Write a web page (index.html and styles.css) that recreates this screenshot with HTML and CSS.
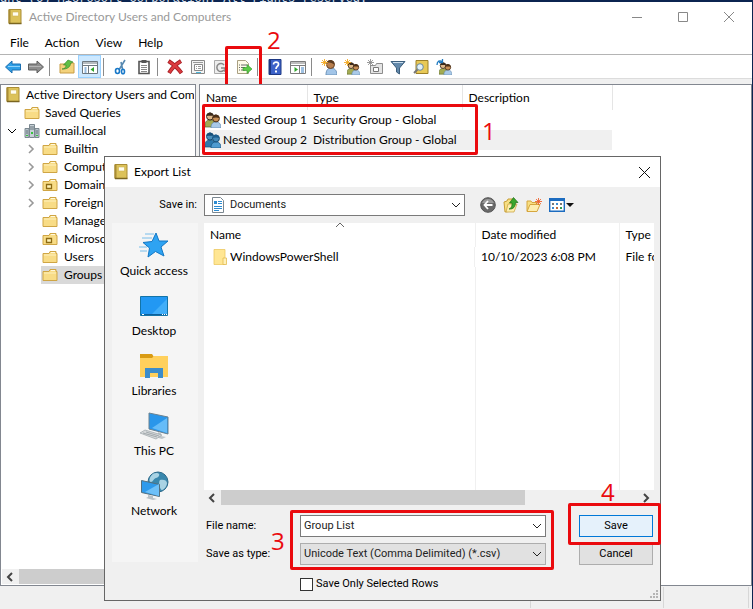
FILE: index.html
```html
<!DOCTYPE html>
<html lang="en">
<head>
  <meta charset="UTF-8">
  <meta name="viewport" content="width=device-width, initial-scale=1.0">
  <title>Active Directory Users and Computers</title>
  <link rel="stylesheet" href="styles.css">
</head>
<body>
  <!-- shared icons -->
  <svg class="sprite" width="0" height="0" aria-hidden="true">
    <symbol id="i-book" viewBox="0 0 16 16">
      <path d="M2 .5h12v14H2z" fill="#dcc25a" stroke="#a98c34"/>
      <path d="M1.500 .5h2v14h-2z" fill="#a98c34"/>
      <path d="M5.500 3h6v4h-6z" fill="#fffdf0" stroke="#cdb250" stroke-width=".6"/>
      <path d="M2 14.500h12.500" stroke="#7a6520" stroke-width="1.500"/>
    </symbol>
    <symbol id="i-folder" viewBox="0 0 16 16">
      <path d="M1 4.500h6l1-2h6v2h1v9H1z" fill="#f8dc86" stroke="#cfa544"/>
      <path d="M9 3.500h4" stroke="#fff8dc"/>
      <path d="M2 6h12" stroke="#fdf0bd"/>
    </symbol>
    <symbol id="i-ou" viewBox="0 0 16 16">
      <path d="M1 4.500h6l1-2h6v2h1v9H1z" fill="#f8dc86" stroke="#cfa544"/>
      <path d="M9 3.500h4" stroke="#fff8dc"/>
      <path d="M4.500 7.500h5v4h-5z" fill="#fff3b8" stroke="#8d6b14" stroke-width="1.300"/>
    </symbol>
    <symbol id="i-domain" viewBox="0 0 16 16">
      <path d="M5.500 1.500h5v13h-5z" fill="#c7d0d6" stroke="#7b8890"/>
      <path d="M1 5.500h4v9H1zM11 5.500h4v9h-4z" fill="#b8c4cb" stroke="#7b8890"/>
      <path d="M6 4h4M6 6h4M2 8h2M12 8h2M2 10h2M12 10h2" stroke="#64727b"/>
      <path d="M7 9h2v2H7zM2 12h2v1H2zM12 12h2v1h-2z" fill="#35c43c"/>
    </symbol>
    <symbol id="i-right" viewBox="0 0 10 10"><path d="M3 1l4 4-4 4" fill="none" stroke="#999" stroke-width="1.600"/></symbol>
    <symbol id="i-down" viewBox="0 0 10 10"><path d="M1 3l4 4 4-4" fill="none" stroke="currentColor"/></symbol>
    <symbol id="i-group" viewBox="0 0 16 16">
      <path d="M0 15c0-5 1-7 5-7s5 2 5 7z" fill="#a3ab52" stroke="#59662a" stroke-width=".7"/>
      <circle cx="5" cy="4.500" r="3.500" fill="#ddb98c" stroke="#3b2a1c"/>
      <path d="M1.500 4c0-4 6-5 7-.5-2 .5-4 0-7 .5z" fill="#3b2a1c"/>
      <path d="M6 16c0-4.500 2-6 5-6s5 1.500 5 6z" fill="#a9c9e8" stroke="#6288ac" stroke-width=".7"/>
      <circle cx="11" cy="6.500" r="3.400" fill="#c98f55" stroke="#4a2e17"/>
      <path d="M7.500 6c0-4.500 6-5 7 0-2-.8-5-.8-7 0z" fill="#4a2e17"/>
    </symbol>
    <symbol id="i-group-blue" viewBox="0 0 16 16">
      <path d="M0 15c0-5 1-7 5-7s5 2 5 7z" fill="#2c78ad" stroke="#174f78" stroke-width=".7"/>
      <circle cx="5" cy="4.500" r="3.500" fill="#4a8fbb" stroke="#174f78"/>
      <path d="M1.500 4c0-4 6-5 7-.5-2 .5-4 0-7 .5z" fill="#174f78"/>
      <path d="M6 16c0-4.500 2-6 5-6s5 1.500 5 6z" fill="#4f9bd0" stroke="#174f78" stroke-width=".7"/>
      <circle cx="11" cy="6.500" r="3.400" fill="#4389b8" stroke="#174f78"/>
      <path d="M7.500 6c0-4.500 6-5 7 0-2-.8-5-.8-7 0z" fill="#1d5f8f"/>
    </symbol>
    <symbol id="i-star" viewBox="0 0 10 10"><path d="M5 0v10M0 5h10M1.500 1.500l7 7M8.500 1.500l-7 7" stroke="currentColor" stroke-width="1.200"/></symbol>
  </svg>

  <div class="console">ght (C) Microsoft Corporation. All rights reserved.</div>

  <main class="window">
    <header class="titlebar">
      <svg class="ico"><use href="#i-book"/></svg>
      <h1>Active Directory Users and Computers</h1>
      <div class="winbtns">
        <button aria-label="Minimize"><svg width="10" height="10"><path d="M0 5.500h10" stroke="#888"/></svg></button>
        <button aria-label="Maximize"><svg width="10" height="10"><path d="M.5.500h9v9h-9z" fill="none" stroke="#888"/></svg></button>
        <button aria-label="Close"><svg width="10" height="10"><path d="M0 0l10 10M10 0L0 10" stroke="#888"/></svg></button>
      </div>
    </header>

    <nav class="menubar">
      <button>File</button>
      <button>Action</button>
      <button>View</button>
      <button>Help</button>
    </nav>

    <div class="toolbar">
      <button aria-label="Back"><svg class="ico"><path d="M.5 8L7 2v3h8.500v6H7v3z" fill="#2f9fe6" stroke="#1c6fb0"/><path d="M3 7.500h12" stroke="#8fd2fa"/></svg></button>
      <button aria-label="Forward"><svg class="ico"><path d="M15.500 8L9 2v3H.5v6H9v3z" fill="#8e8e8e" stroke="#5c5c5c"/><path d="M1 7.500h12" stroke="#b5b5b5"/></svg></button>
      <span class="sep"></span>
      <button aria-label="Up one level"><svg class="ico"><path d="M1 5h5l1-1h8v10H1z" fill="#f3d27c" stroke="#c79c44"/><path d="M3 10c3 0 4-2 4-4H4.500L9 1l5 2-2.500 1.500c0 3-3 6-8.500 5.500z" fill="#5fbf45" stroke="#2c7d22" stroke-width=".6"/></svg></button>
      <button class="on" aria-label="Show console tree"><svg class="ico"><path d="M.5 2.500h15v12H.5z" fill="#fff" stroke="#6d7880"/><path d="M1 4h14M1 6.500h14" stroke="#6d7880"/><path d="M6.500 7v8" stroke="#6d7880"/><path d="M2.500 9h2M2.500 11h2M2.500 13h2" stroke="#2c77bd"/><path d="M12 8v5l-3.500-2.500z" fill="#2fa52b"/></svg></button>
      <span class="sep"></span>
      <button aria-label="Cut"><svg class="ico"><path d="M12 1L6.500 10M8 3l1.500 7" stroke="#5789b0" stroke-width="1.600"/><ellipse cx="4.500" cy="12" rx="2" ry="2.500" fill="none" stroke="#1878c8" stroke-width="1.600"/><ellipse cx="10" cy="12.500" rx="1.500" ry="2.300" fill="none" stroke="#1878c8" stroke-width="1.600"/></svg></button>
      <button aria-label="Paste"><svg class="ico"><path d="M3 2.500h10v12H3z" fill="#fff" stroke="#555" stroke-width="1.600"/><path d="M5.500 1h5v3h-5z" fill="#555"/><path d="M5 6.500h6M5 8.500h6M5 10.500h6M5 12.500h6" stroke="#888"/></svg></button>
      <span class="sep"></span>
      <button aria-label="Delete"><svg class="ico"><path d="M1.500 2C6 5 11 9 14.500 14M14 2C9 5 5 9 2 14" fill="none" stroke="#a51d23" stroke-width="4"/><path d="M2 2.500C6 5 11 9 14 13.500M13.500 2.500C9 5 5 9 2.500 13.500" fill="none" stroke="#dc3b3f" stroke-width="2.500"/></svg></button>
      <button aria-label="Properties"><svg class="ico"><path d="M1.500 1.500h13v13h-13z" fill="#f4f4f4" stroke="#888"/><path d="M4.500 5.500h8v6h-8z" fill="#fff" stroke="#888"/><path d="M3 3.500h10M6 7.500h1M8 7.500h3M6 9.500h1M8 9.500h3" stroke="#999"/><path d="M6 13.500h5" stroke="#4bb4d8"/></svg></button>
      <button aria-label="Refresh"><svg class="ico"><path d="M1.500 1.500h10l3 3v10h-13z" fill="#eee" stroke="#aaa"/><path d="M11 6a4 4 0 1 0 0 5M8 9h4v4" fill="none" stroke="#888" stroke-width="1.500"/></svg></button>
      <button class="marked" aria-label="Export list">
        <svg class="ico"><path d="M1.500 1.500h8l3 3v10h-11z" fill="#fffbe8" stroke="#a99f82"/><path d="M3 6h1M5 6h6M3 8.500h1M5 8.500h4M3 11h1M5 11h4" stroke="#6b6b6b"/><path d="M7 8.500h4V5.500l5 4.500-5 4.500v-3H7z" fill="#5ccb46" stroke="#31942a" stroke-width=".6"/></svg>
        <span class="mark mark-2"><b>2</b></span>
      </button>
      <span class="sep"></span>
      <button aria-label="Help"><svg class="ico"><path d="M2 .5h12v15H2z" fill="#3c62c9" stroke="#1d3883"/><path d="M2 .5h2v15H2z" fill="#1d3883"/><path d="M6.500 5.500c0-3.500 5.500-3 5 0-.3 2-2.500 2-2.500 4.500" fill="none" stroke="#fff" stroke-width="1.700"/><path d="M8 11.500h2v2H8z" fill="#fff"/></svg></button>
      <button aria-label="Show action pane"><svg class="ico"><path d="M.5 2.500h15v12H.5z" fill="#fff" stroke="#7c7c7c"/><path d="M1 4h14M1 6.500h14M9.500 7v8" stroke="#7c7c7c"/><path d="M11 9h3M11 11h3M11 13h3" stroke="#3f82c4"/><path d="M4.500 8v5L8 10.500z" fill="#2fa52b"/></svg></button>
      <span class="sep"></span>
      <button aria-label="New user"><svg class="ico"><path d="M5 16c0-5 2-7 5-7s6 2 6 7z" fill="#a2c5e8" stroke="#6c93b9"/><circle cx="9.500" cy="5.500" r="4" fill="#b97f4e" stroke="#6b4425"/><path d="M6 3.500c2-4 7-3 7.500 2.500-2-2-4-2.500-7.500-2.500z" fill="#5b3b20"/><use class="spark" href="#i-star" width="7" height="7"/></svg></button>
      <button aria-label="New group"><svg class="ico"><use href="#i-group" x="3" y="3" width="13" height="13"/><use class="spark" href="#i-star" width="7" height="7"/></svg></button>
      <button aria-label="New organizational unit"><svg class="ico"><path d="M3.500 6.500h5l1-2h6v10h-12z" fill="#e4e4e4" stroke="#8d8d8d"/><path d="M6.500 8.500h5v4h-5z" fill="#fff" stroke="#777"/><use class="spark-grey" href="#i-star" width="7" height="7"/></svg></button>
      <button aria-label="Filter"><svg class="ico"><path d="M1 2.500h14L9.500 9v6l-3-2V9z" fill="#6288aa" stroke="#3d5f7d"/><path d="M3 3.500h10" stroke="#c9dcec"/></svg></button>
      <button aria-label="Find"><svg class="ico"><path d="M3 1.500h12v13H3z" fill="#e8c957" stroke="#9d8029"/><circle cx="7" cy="8" r="3.300" fill="#dff0fa" stroke="#6b8797"/><path d="M4.500 10.500L1 14" stroke="#777" stroke-width="2"/></svg></button>
      <button aria-label="Add to group"><svg class="ico"><use href="#i-group" x="3" y="3" width="13" height="13"/><path d="M1 6c0-4 3-5 5-3.500M6.500 0v3.500H3" fill="none" stroke="#1f7ac0" stroke-width="1.300"/></svg></button>
    </div>

    <div class="panes">
      <section class="tree">
        <ul>
          <li><svg class="ico"><use href="#i-book"/></svg>Active Directory Users and Com</li>
          <li class="l1"><i></i><svg class="ico"><use href="#i-folder"/></svg>Saved Queries</li>
          <li class="l1"><i><svg class="tw"><use href="#i-down"/></svg></i><svg class="ico"><use href="#i-domain"/></svg>cumail.local</li>
          <li class="l2"><i><svg class="tw"><use href="#i-right"/></svg></i><span><svg class="ico"><use href="#i-folder"/></svg>Builtin</span></li>
          <li class="l2"><i><svg class="tw"><use href="#i-right"/></svg></i><span><svg class="ico"><use href="#i-folder"/></svg>Computers</span></li>
          <li class="l2"><i><svg class="tw"><use href="#i-right"/></svg></i><span><svg class="ico"><use href="#i-ou"/></svg>Domain</span></li>
          <li class="l2"><i><svg class="tw"><use href="#i-right"/></svg></i><span><svg class="ico"><use href="#i-folder"/></svg>Foreign</span></li>
          <li class="l2"><i></i><span><svg class="ico"><use href="#i-folder"/></svg>Managed</span></li>
          <li class="l2"><i></i><span><svg class="ico"><use href="#i-ou"/></svg>Microsoft</span></li>
          <li class="l2"><i></i><span><svg class="ico"><use href="#i-folder"/></svg>Users</span></li>
          <li class="l2"><i></i><span class="sel"><svg class="ico"><use href="#i-folder"/></svg>Groups</span></li>
        </ul>
        <div class="hscroll">
          <svg class="tw"><path d="M7 1L3 5l4 4" fill="none" stroke="#444" stroke-width="2"/></svg>
          <div class="thumb"></div>
        </div>
      </section>

      <section class="list">
        <table>
          <colgroup><col class="c-name"><col class="c-type"><col class="c-desc"><col></colgroup>
          <thead><tr><th>Name</th><th>Type</th><th>Description</th><td></td></tr></thead>
          <tbody>
            <tr><td class="name"><svg class="ico"><use href="#i-group"/></svg>Nested Group 1</td><td>Security Group - Global</td><td></td><td></td></tr>
            <tr class="sel"><td class="name"><svg class="ico"><use href="#i-group-blue"/></svg>Nested Group 2</td><td>Distribution Group - Global</td><td></td><td></td></tr>
          </tbody>
        </table>
        <span class="mark mark-1"><b>1</b></span>
      </section>
    </div>

    <footer class="status"><span></span><span></span><span></span></footer>
  </main>

  <form class="dialog" role="dialog" aria-label="Export List">
    <div class="dlg-title">
      <svg class="ico"><use href="#i-book"/></svg>
      <h2>Export List</h2>
      <button type="button" aria-label="Close"><svg width="11" height="11"><path d="M0 0l11 11M11 0L0 11" stroke="#111"/></svg></button>
    </div>

    <div class="savein">
      <label for="folder">Save in:</label>
      <div class="combo">
        <svg class="ico"><path d="M2.500.500h8l3 3v12h-11z" fill="#fff" stroke="#7b8790"/><path d="M8 4.500h4M8 6.500h4M4 9.500h8M4 11.500h8M4 13.500h5" stroke="#2c8bd0"/><path d="M4 4h3v3H4z" fill="#2c8bd0"/></svg>
        <select id="folder"><option>Documents</option></select>
        <svg class="tw"><use href="#i-down"/></svg>
      </div>
      <div class="tools">
        <button type="button" aria-label="Go back"><svg class="ico"><circle cx="8" cy="8" r="7.300" fill="#6a6a6a" stroke="#555"/><path d="M2 6a6.500 6.500 0 0 1 12 0z" fill="#9b9b9b"/><path d="M8 4L4.500 8 8 12M5 8h7.500" fill="none" stroke="#fff" stroke-width="1.800"/></svg></button>
        <button type="button" aria-label="Up one level"><svg class="ico"><path d="M1 5l3-1 1-2h5v12l-8 1z" fill="#f7df83" stroke="#c79e37"/><path d="M3 15l2-8h9l-3 8z" fill="#fdeeb0" stroke="#c79e37" stroke-width=".7"/><path d="M6 12c3-1 3-4 3-6H6.500L10.500.500 15 5.500h-2.500c0 4-2 7-6.500 6.500z" fill="#3aa62d" stroke="#1f6f18" stroke-width=".7"/></svg></button>
        <button type="button" aria-label="New folder"><svg class="ico"><path d="M1 14V4h4l1 1.500h5V8" fill="#f7df83" stroke="#d6a63e"/><path d="M1 14.500l3-7h10l-3 7z" fill="#fdeeb0" stroke="#d6a63e"/><use class="spark-red" href="#i-star" x="9" y="1" width="7" height="7"/></svg></button>
        <button type="button" class="wide" aria-label="View menu"><svg class="ico"><path d="M.7 1.700h14.600v12.600H.7z" fill="#fff" stroke="#1c6cc0" stroke-width="1.400"/><path d="M0 1h16v3H0z" fill="#1c6cc0"/><path d="M3 6h2v2H3zM11 6h2v2h-2z" fill="#777"/><path d="M7 6h2v2H7zM3 10h2v2H3z" fill="#3c8ad0"/><path d="M7 10h2v2H7z" fill="#c06a3a"/><path d="M11 10h2v2h-2z" fill="#2e9a50"/></svg><svg width="8" height="4"><path d="M0 0h8L4 4z" fill="#111"/></svg></button>
      </div>
    </div>

    <div class="dlg-body">
      <nav class="places">
        <button type="button"><svg width="32" height="32"><path d="M18 3l3 8h9l-7 6 3 9-8.500-4.500L10 27l1.500-9L5 12.500l9-1z" fill="#2ea3f2" stroke="#1377c4"/><path d="M7 4h9M4 8h10M1 17h8M2 21h7" stroke="#79bdea"/></svg>Quick access</button>
        <button type="button"><svg width="32" height="32"><path d="M2.500 6.500h27v19h-27z" fill="#2298f3" stroke="#1374a8"/><path d="M13 25L29 9v16z" fill="#41aef9"/><path d="M3 24.500h26" stroke="#0d5f9b"/><path d="M4 24.500h2M24 24.500h1M26 24.500h1M28 24.500h1" stroke="#fff"/></svg>Desktop</button>
        <button type="button"><svg width="32" height="32"><path d="M2 4h12l2 3v5H2z" fill="#d99b13"/><path d="M2 8h12l2-2h14v21H2z" fill="#ffd05c"/><path d="M7 18h18v10h-5v-5h-8v5H7z" fill="#3c8dcb"/></svg>Libraries</button>
        <button type="button"><svg width="32" height="32"><path d="M11 3l19 4v17l-19-5z" fill="#2a96ea" stroke="#6b8290"/><path d="M14 18L29 8v15z" fill="#66bcf8"/><path d="M20 22l3 1v3l5 1-4 2-7-2 3-1z" fill="#bfc6ca"/><path d="M2 23l5-3 17 5-6 4z" fill="#d5d8da" stroke="#9ba3a8" stroke-width=".7"/><path d="M5 23l14 4M8 22l13 4" stroke="#8d959a" stroke-width=".7"/></svg>This PC</button>
        <button type="button"><svg width="32" height="32"><circle cx="20" cy="12" r="10" fill="#3987ad" stroke="#2d6a8a"/><path d="M13 6c3-4 7-3 8-2s-1 4-3 4-3 4-5 4-2-3 0-6zM22 10c3-1 7 0 7 3s-3 7-5 7-4-8-2-10z" fill="#a9d3e4"/><path d="M3.500 10.500l18 4v12l-18-4z" fill="#2e9aec" stroke="#54707f"/><path d="M7 22l14-8v12z" fill="#6ec0f8"/><path d="M10 25l5 1v2l4 1-4 1-7-2 2-1z" fill="#b9c1c6"/></svg>Network</button>
      </nav>

      <div class="dlg-main">
        <div class="files">
          <table>
            <colgroup><col class="f-name"><col class="f-date"><col></colgroup>
            <thead><tr><th>Name<svg class="sort"><path d="M0 4l4-4 4 4" fill="none" stroke="#666"/></svg></th><th>Date modified</th><th>Type</th></tr></thead>
            <tbody>
              <tr><td class="name"><svg class="ico"><path d="M2 .5h11v15H2z" fill="#ffe693" stroke="#ecc861" stroke-width=".8"/><path d="M11 9h3.500v6.500H11z" fill="#fff0b8" stroke="#e3bb50" stroke-width=".8"/></svg>WindowsPowerShell</td><td>10/10/2023 6:08 PM</td><td>File folder</td></tr>
              <tr class="fill"><td></td><td></td><td></td></tr>
            </tbody>
          </table>
        </div>
        <div class="hscroll">
          <svg class="tw"><path d="M7 1L3 5l4 4" fill="none" stroke="#444" stroke-width="2"/></svg>
          <div class="track"><div class="thumb"></div></div>
          <svg class="tw"><path d="M3 1l4 4-4 4" fill="none" stroke="#444" stroke-width="2"/></svg>
        </div>

        <div class="fields">
          <label for="fname">File name:</label>
          <div class="combo"><input type="text" id="fname" value="Group List"><svg class="tw"><use href="#i-down"/></svg></div>
          <button type="submit" class="btn primary">Save</button>
          <label for="ftype">Save as type:</label>
          <div class="combo grey"><select id="ftype"><option>Unicode Text (Comma Delimited) (*.csv)</option></select><svg class="tw"><use href="#i-down"/></svg></div>
          <button type="button" class="btn">Cancel</button>
          <label class="check"><input type="checkbox">Save Only Selected Rows</label>
        </div>
      </div>
    </div>
    <svg class="grip"><path d="M6 0h2v2H6zM3 3h2v2H3zM6 3h2v2H6zM0 6h2v2H0zM3 6h2v2H3zM6 6h2v2H6z" fill="#b5b5b5"/></svg>
    <span class="mark mark-3"><b>3</b></span>
    <span class="mark mark-4"><b>4</b></span>
  </form>
</body>
</html>
```
FILE: styles.css
```css
* {
  box-sizing: border-box;
}
body {
  margin: 0;
  height: 100vh;
  display: flex;
  flex-direction: column;
  overflow: hidden;
  position: relative;
  background: #0b2450;
  color: #000;
  font-family: Lato, "Open Sans", sans-serif;
  font-size: 12px;
  line-height: 18px;
}
button, input, select {
  font: inherit;
  color: inherit;
  margin: 0;
  padding: 0;
  border: 0;
  background: none;
}
h1, h2 {
  margin: 0;
  font-size: 12px;
  font-weight: normal;
}
ul {
  margin: 0;
  padding: 0;
  list-style: none;
}
svg {
  display: block;
  flex: none;
}
.sprite {
  position: absolute;
}
.ico {
  width: 16px;
  height: 16px;
}
.tw {
  width: 10px;
  height: 10px;
}
.console {
  height: 2px;
  display: flex;
  align-items: flex-end;
  overflow: hidden;
  white-space: nowrap;
  color: #dde3ee;
  font: 12px/6px "Liberation Mono", monospace;
}

/* main window */
.window {
  flex: 1;
  min-height: 0;
  display: flex;
  flex-direction: column;
  margin-right: 1px;
  background: #f0f0f0;
}
.titlebar {
  display: flex;
  align-items: center;
  gap: 6px;
  height: 29px;
  padding-left: 7px;
  background: #fff;
}
.titlebar h1 {
  flex: 1;
  color: #999;
}
.winbtns {
  display: flex;
}
.winbtns button {
  width: 46px;
  height: 29px;
  display: grid;
  place-items: center;
}
.menubar {
  display: flex;
  gap: 16px;
  height: 24px;
  padding: 0 10px;
  background: #fff;
  border-bottom: 1px solid #b4b4b4;
}
.toolbar {
  display: flex;
  height: 24px;
  padding: 0 1px;
  background: #fff;
  border-bottom: 1px solid #dcdcdc;
}
.toolbar button {
  width: 23px;
  display: grid;
  place-items: center;
}
.toolbar .on {
  background: #cce8ff;
  border: 1px solid #99d1ff;
}
.sep {
  width: 8px;
}
.sep::before {
  content: "";
  display: block;
  width: 1px;
  height: 18px;
  margin: 3px 2px;
  background: #8a8a8a;
}
.spark {
  color: #f2a516;
}
.spark-grey {
  color: #888;
}
.spark-red {
  color: #ee5a24;
}
.panes {
  flex: 1;
  min-height: 0;
  display: flex;
  gap: 3px;
  padding-top: 5px;
}
.tree {
  width: 196px;
  display: flex;
  flex-direction: column;
  justify-content: space-between;
  padding: 1px;
  background: #fff;
  border: 1px solid #828790;
}
.tree ul {
  overflow: hidden;
}
.tree li {
  display: flex;
  align-items: center;
  gap: 5px;
  height: 18px;
  padding-left: 3px;
  white-space: nowrap;
}
.tree i {
  flex: none;
  width: 10px;
}
.tree .l1 {
  padding-left: 5px;
}
.tree .l1 .ico {
  margin-left: 2px;
}
.tree .l2 {
  padding-left: 24px;
}
.tree span {
  flex: 1;
  display: flex;
  align-items: center;
  gap: 6px;
  padding-left: 1px;
}
.tree .sel {
  background: #d9d9d9;
}
.hscroll {
  display: flex;
  align-items: center;
  gap: 4px;
  height: 15px;
  padding: 0 3px;
  background: #f0f0f0;
}
.thumb {
  width: 140px;
  height: 15px;
  background: #cdcdcd;
}
.list {
  flex: 1;
  position: relative;
  background: #fff;
  border: 1px solid #828790;
}
table {
  width: 100%;
  table-layout: fixed;
  border-collapse: collapse;
}
th, td {
  padding: 0 0 0 6px;
  font-weight: normal;
  text-align: left;
  white-space: nowrap;
}
.list th {
  height: 25px;
  border-right: 1px solid #e5e5e5;
}
.list tbody td {
  height: 20px;
}
.list .c-name {
  width: 107px;
}
.list .c-type {
  width: 155px;
}
.list .c-desc {
  width: 150px;
}
.name {
  display: flex;
  align-items: center;
  gap: 2px;
}
.list .name {
  padding-left: 5px;
}
.list .sel td:not(:last-child) {
  background: #f0f0f0;
}
.status {
  display: grid;
  grid-template-columns: 1fr 133px 85px;
  height: 23px;
  padding: 1px 3px 1px 0;
}
.status span {
  border-right: 1px solid #d7d7d7;
}

/* export dialog */
.dialog {
  position: absolute;
  left: 104px;
  top: 156px;
  width: 557px;
  background: #f0f0f0;
  border: 1px solid #666;
}
.dlg-title {
  display: flex;
  align-items: center;
  gap: 5px;
  height: 30px;
  padding-left: 8px;
  background: #fff;
}
.dlg-title h2 {
  flex: 1;
}
.dlg-title button {
  width: 31px;
  height: 30px;
  display: grid;
  place-items: center;
}
.savein {
  display: flex;
  align-items: center;
  height: 36px;
}
.savein, .fields {
  font-family: Roboto, sans-serif;
  font-size: 11px;
}
.savein > label {
  width: 92px;
  text-align: right;
}
.combo {
  display: flex;
  align-items: center;
  gap: 4px;
  height: 22px;
  padding: 0 3px;
  background: #fff;
  border: 1px solid #7a7a7a;
  color: #222;
}
.combo select, .combo input {
  flex: 1;
  min-width: 0;
  appearance: none;
  outline: none;
}
.combo.grey {
  background: #e1e1e1;
  border-color: #adadad;
}
.savein .combo {
  width: 261px;
  margin-left: 7px;
  padding-left: 5px;
}
.tools {
  display: flex;
  gap: 7px;
  margin-left: 15px;
}
.tools .wide {
  display: flex;
  align-items: center;
  gap: 1px;
}
.dlg-body {
  display: flex;
  gap: 6px;
  padding: 0 6px 0 7px;
}
.places {
  width: 86px;
  height: 339px;
  padding-top: 7px;
  background: #f5f5f5;
}
.places button {
  width: 84px;
  height: 60px;
  display: flex;
  flex-direction: column;
  align-items: center;
}
.dlg-main {
  flex: 1;
  min-width: 0;
}
.files {
  height: 267px;
  overflow: hidden;
  background: #fff;
}
.files th {
  height: 24px;
  position: relative;
}
.files tbody td {
  height: 20px;
}
.files .fill td {
  height: 223px;
}
.files th:not(:last-child), .files td:not(:last-child) {
  border-right: 1px solid #f0f0f0;
}
.files .f-name {
  width: 271px;
}
.files .f-date {
  width: 144px;
}
.files .name {
  padding-left: 8px;
}
.sort {
  position: absolute;
  left: 132px;
  top: 0;
  width: 9px;
  height: 5px;
}
.dlg-main .thumb {
  width: 304px;
}
.track {
  flex: 1;
}
.fields {
  display: grid;
  grid-template-columns: 94px 246px 74px;
  row-gap: 6px;
  align-items: center;
  padding: 10px 0 7px 2px;
}
.fields .btn {
  width: 74px;
  height: 21px;
  margin-left: 33px;
  background: #e1e1e1;
  border: 1px solid #adadad;
}
.fields .primary {
  height: 22px;
  background: #e5f1fb;
  border-color: #0078d7;
}
.check {
  grid-column: 2;
  display: flex;
  align-items: center;
  gap: 3px;
  padding-top: 4px;
}
.check input {
  appearance: none;
  width: 13px;
  height: 13px;
  background: #fff;
  border: 1px solid #333;
}
.grip {
  position: absolute;
  right: 2px;
  bottom: 2px;
  width: 8px;
  height: 8px;
}

/* numbered callouts */
.mark {
  position: absolute;
  border: 3px solid #ea0a0e;
  border-radius: 2px;
  pointer-events: none;
}
.mark b {
  position: absolute;
  color: #ea0a0e;
  font: 24px/24px "Open Sans", sans-serif;
}
.marked {
  position: relative;
}
.mark-1 {
  left: 2px;
  top: 19px;
  width: 276px;
  height: 51px;
}
.mark-1 b {
  left: 277px;
  top: 12px;
}
.mark-2 {
  left: -7px;
  top: -9px;
  width: 37px;
  height: 41px;
}
.mark-2 b {
  left: 39px;
  top: -21px;
}
.mark-3 {
  left: 185px;
  top: 353px;
  width: 264px;
  height: 60px;
}
.mark-3 b {
  left: -22px;
  top: 16px;
}
.mark-4 {
  left: 463px;
  top: 346px;
  width: 93px;
  height: 42px;
}
.mark-4 b {
  left: 30px;
  top: -26px;
}
```
